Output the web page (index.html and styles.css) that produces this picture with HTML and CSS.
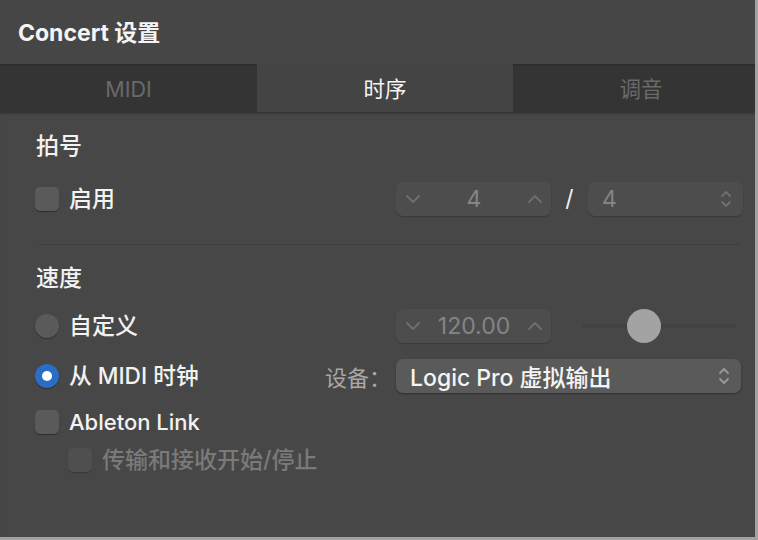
FILE: index.html
```html
<!DOCTYPE html>
<html lang="zh">
<head>
<meta charset="utf-8">
<title>Concert 设置</title>
<link rel="stylesheet" href="styles.css">
</head>
<body>
<div class="window">
  <div class="titlebar">Concert 设置</div>
  <div class="tabs">
    <div class="tab">MIDI</div>
    <div class="tab active">时序</div>
    <div class="tab">调音</div>
  </div>
  <div class="content">
    <div class="heading">拍号</div>
    <div class="row row-sig">
      <div class="left">
        <label class="opt"><span class="check"></span><span class="label cjk">启用</span></label>
      </div>
      <div class="right">
        <div class="stepper">
          <svg class="chev" width="16" height="10" viewBox="0 0 16 10"><polyline points="2,2 8,8 14,2"/></svg>
          <span class="val">4</span>
          <svg class="chev" width="16" height="10" viewBox="0 0 16 10"><polyline points="2,8 8,2 14,8"/></svg>
        </div>
        <span class="slash">/</span>
        <div class="popup dim">
          <span class="val">4</span>
          <svg class="updown" width="12" height="20" viewBox="0 0 12 20"><polyline points="2,7 6,3 10,7"/><polyline points="2,13 6,17 10,13"/></svg>
        </div>
      </div>
    </div>
    <div class="sep"></div>
    <div class="heading heading2">速度</div>
    <div class="row row-tempo">
      <div class="left">
        <label class="opt"><span class="radio"></span><span class="label cjk">自定义</span></label>
      </div>
      <div class="right">
        <div class="stepper">
          <svg class="chev" width="16" height="10" viewBox="0 0 16 10"><polyline points="2,2 8,8 14,2"/></svg>
          <span class="val">120.00</span>
          <svg class="chev" width="16" height="10" viewBox="0 0 16 10"><polyline points="2,8 8,2 14,8"/></svg>
        </div>
        <div class="slider"><div class="track"></div><div class="knob"></div></div>
      </div>
    </div>
    <div class="row row-midi">
      <div class="left">
        <label class="opt"><span class="radio on"></span><span class="label mixed">从 MIDI 时钟</span></label>
        <span class="devlabel">设备：</span>
      </div>
      <div class="right">
        <div class="popup wide">
          <span class="val bright">Logic Pro 虚拟输出</span>
          <svg class="updown" width="12" height="20" viewBox="0 0 12 20"><polyline points="2,7 6,3 10,7"/><polyline points="2,13 6,17 10,13"/></svg>
        </div>
      </div>
    </div>
    <div class="row row-link">
      <label class="opt"><span class="check"></span><span class="label">Ableton Link</span></label>
    </div>
    <div class="row row-sub">
      <label class="opt"><span class="check disabled"></span><span class="label cjk muted">传输和接收开始/停止</span></label>
    </div>
  </div>
</div>
</body>
</html>
```
FILE: styles.css
```css
html, body {
  margin: 0;
  padding: 0;
}
body {
  background: #a2a2a2;
  width: 758px;
  height: 540px;
  font-family: "Inter", "Noto Sans CJK SC", sans-serif;
  color: #f2f2f2;
}
.window {
  width: 755px;
  height: 537px;
  background: #474747;
  display: flex;
  flex-direction: column;
  overflow: hidden;
}
.titlebar {
  height: 64px;
  box-sizing: border-box;
  padding-left: 18px;
  line-height: 66px;
  font-size: 23px;
  font-weight: 700;
  color: #f4f4f4;
  background: #464646;
}
.tabs {
  height: 48px;
  display: grid;
  grid-template-columns: 257px 256px 256px;
  overflow: hidden;
  background: #343434;
  box-shadow: inset 0 2px 2px -1px #2a2a2a;
  position: relative;
  z-index: 1;
}
.tab {
  text-align: center;
  line-height: 50px;
  font-size: 21.5px;
  color: #6a6a6a;
}
.tab.active {
  background: #444444;
  color: #f4f4f4;
}
.content {
  flex: 1;
  padding: 20px 12px 0 35px;
  display: flex;
  flex-direction: column;
  box-shadow: inset 0 3px 3px -2px #2c2c2c;
}
.heading {
  height: 28px;
  line-height: 28px;
  font-size: 23px;
  font-weight: 500;
  padding-left: 1px;
}
.heading2 {
  margin-top: 19px;
}
.sep {
  margin-top: 28px;
  margin-left: 3px;
  margin-right: 3px;
  height: 1px;
  background: #3d3d3d;
}
.row {
  display: flex;
  align-items: center;
}
.row-sig { margin-top: 22px; height: 34px; }
.row-tempo { margin-top: 17px; height: 34px; }
.row-midi { margin-top: 16px; height: 34px; }
.row-link { margin-top: 17px; height: 24px; }
.row-sub { margin-top: 14px; height: 24px; padding-left: 33px; }
.left {
  flex: 1;
  display: flex;
  align-items: center;
  justify-content: space-between;
}
.right {
  width: 347px;
  display: flex;
  align-items: center;
}
.opt {
  display: flex;
  align-items: center;
  gap: 10px;
}
.label {
  font-size: 22px;
  line-height: 24px;
  font-weight: 500;
}
.label.cjk {
  font-size: 23px;
}
.label.mixed {
  font-size: 22.7px;
}
.muted {
  color: #7a7a7a;
}
.check {
  width: 24px;
  height: 24px;
  box-sizing: border-box;
  border-radius: 5px;
  background: #5a5a5a;
  box-shadow: 0 1px 1px rgba(0,0,0,0.35);
}
.check.disabled {
  background: #4f4f4f;
  box-shadow: 0 1px 1px rgba(0,0,0,0.2);
}
.radio {
  width: 24px;
  height: 24px;
  border-radius: 50%;
  background: #5a5a5a;
  box-shadow: 0 1px 1px rgba(0,0,0,0.35);
  display: flex;
  align-items: center;
  justify-content: center;
}
.radio.on {
  background: #2b6dc4;
}
.radio.on::after {
  content: "";
  width: 10px;
  height: 10px;
  border-radius: 50%;
  background: #ffffff;
}
.devlabel {
  font-size: 22px;
  color: #a8a8a8;
  margin-right: 5px;
}
.stepper {
  width: 155px;
  height: 34px;
  box-sizing: border-box;
  border-radius: 7px;
  background: #4d4d4d;
  box-shadow: 0 1px 1px rgba(0,0,0,0.2);
  display: flex;
  align-items: center;
  justify-content: space-between;
  padding: 0 8px 0 9px;
}
.val {
  font-size: 23px;
  color: #858585;
}
.bright {
  color: #f4f4f4;
  font-weight: 500;
}
.chev polyline, .updown polyline {
  fill: none;
  stroke: #6f6f6f;
  stroke-width: 1.8;
  stroke-linecap: round;
  stroke-linejoin: round;
}
.slash {
  width: 37px;
  text-align: center;
  font-size: 23px;
  color: #f0f0f0;
}
.popup {
  width: 155px;
  height: 34px;
  box-sizing: border-box;
  border-radius: 7px;
  background: #4d4d4d;
  box-shadow: 0 1px 1px rgba(0,0,0,0.2);
  display: flex;
  align-items: center;
  justify-content: space-between;
  padding: 0 11px 0 14px;
}
.popup.wide {
  width: 345px;
  background: #5a5a5a;
  box-shadow: 0 1px 2px rgba(0,0,0,0.35);
}
.popup.wide .updown polyline {
  stroke: #9a9a9a;
}
.slider {
  margin-left: 31px;
  width: 154px;
  height: 34px;
  position: relative;
  display: flex;
  align-items: center;
}
.track {
  width: 100%;
  height: 4px;
  border-radius: 2px;
  background: #424242;
}
.knob {
  position: absolute;
  left: 45px;
  top: 0;
  width: 34px;
  height: 34px;
  border-radius: 50%;
  background: #a3a3a3;
}
```
